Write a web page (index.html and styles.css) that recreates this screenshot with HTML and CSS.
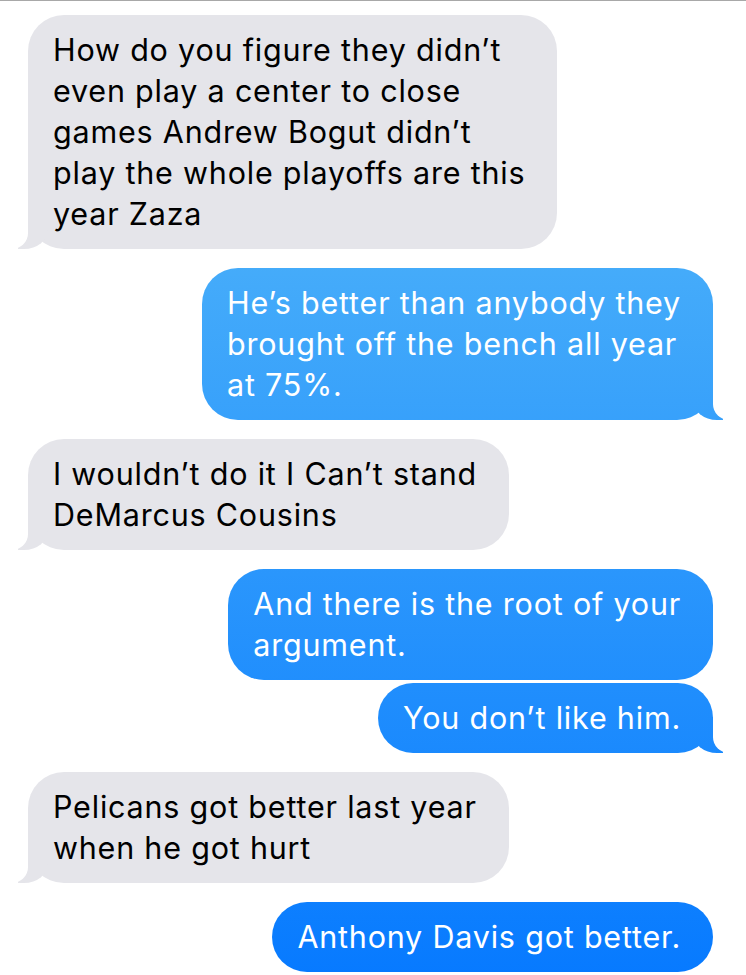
FILE: index.html
```html
<!DOCTYPE html>
<html lang="en">
<head>
    <meta charset="UTF-8">
    <meta name="viewport" content="width=device-width, initial-scale=1.0">
    <title>Messages</title>

    <link rel="stylesheet" href="styles.css">
</head>
<body>
    <div class="thread">
        <div class="msg them tail">How do you figure they didn’t<br>even play a center to close<br>games Andrew Bogut didn’t<br>play the whole playoffs are this<br>year Zaza</div>
        <div class="msg me tail">He’s better than anybody they<br>brought off the bench all year<br>at 75%.</div>
        <div class="msg them tail">I wouldn’t do it I Can’t stand<br>DeMarcus Cousins</div>
        <div class="msg me">And there is the root of your<br>argument.</div>
        <div class="msg me tail same">You don’t like him.</div>
        <div class="msg them tail">Pelicans got better last year<br>when he got hurt</div>
        <div class="msg me">Anthony Davis got better.</div>
    </div>
</body>
</html>
```

FILE: styles.css
```css
*, *::before, *::after {
    box-sizing: border-box;
}

body {
    margin: 0;
    background-color: #fff;
    border-top: 1px solid #a8a8a8;
    overflow: hidden;
}

div.thread {
    display: flex;
    flex-direction: column;
    gap: 19px;
    padding: 14px 33px 0 28px;
}

div.msg {
    position: relative;
    width: fit-content;
    padding: 14px 32px 15px 25px;
    border-radius: 36px;
    font: 30.5px/41px Inter, "Noto Sans", sans-serif;
    letter-spacing: 0.8px;
    white-space: nowrap;
}

div.msg.same {
    margin-top: -16px;
}

div.them {
    align-self: flex-start;
    background-color: #e5e5ea;
    color: #000;
}

div.me {
    align-self: flex-end;
    color: #fff;
    background: linear-gradient(#5cbef8, #077aff) fixed;
}

/* tails */
div.tail::before,
div.tail::after {
    content: "";
    position: absolute;
    bottom: 0;
    height: 36px;
}

div.tail::before {
    width: 30px;
    background: inherit;
}

div.tail::after {
    width: 36px;
    background-color: #fff;
}

div.me.tail::before {
    right: -10px;
    border-bottom-left-radius: 24px 20px;
}

div.me.tail::after {
    right: -36px;
    border-bottom-left-radius: 16px;
}

div.them.tail::before {
    left: -10px;
    border-bottom-right-radius: 24px 20px;
}

div.them.tail::after {
    left: -36px;
    border-bottom-right-radius: 16px;
}
```
